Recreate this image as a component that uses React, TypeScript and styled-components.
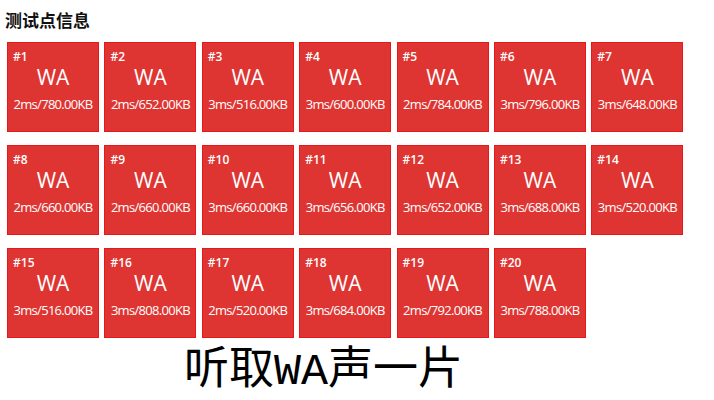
import React from "react";
import styled, { createGlobalStyle } from "styled-components";

const Global = createGlobalStyle`
  html, body { margin: 0; padding: 0; background: #ffffff; }
  body { font-family: "Open Sans", "Noto Sans CJK SC", sans-serif; }
`;

const Page = styled.div`
  width: 714px;
  height: 400px;
  overflow: hidden;
  padding-left: 5px;
  box-sizing: border-box;
`;

const Title = styled.h3`
  margin: 0;
  padding-top: 8px;
  font-family: "Noto Sans CJK SC", sans-serif;
  font-size: 17px;
  line-height: 24px;
  font-weight: 700;
  color: #111;
`;

const Grid = styled.div`
  margin: 10px 0 0 2px;
  display: grid;
  grid-template-columns: repeat(7, 92px);
  grid-auto-rows: 90px;
  column-gap: 5.4px;
  row-gap: 13px;
`;

const Card = styled.div`
  box-sizing: border-box;
  border: 1px solid #e81818;
  background: #de3532;
  color: #ffffff;
  padding: 6px 0 0 5px;
  display: flex;
  flex-direction: column;
  font-family: "Open Sans", sans-serif;
`;

const Label = styled.div`
  font-size: 12px;
  line-height: 16px;
  font-weight: 600;
`;

const Status = styled.div`
  font-size: 21px;
  line-height: 24px;
  font-weight: 500;
  text-align: center;
  margin-left: -5px;
`;

const Stats = styled.div`
  margin: 6.5px 0 0 -5px;
  font-size: 13px;
  line-height: 16px;
  letter-spacing: -0.7px;
  text-align: center;
`;

const Slogan = styled.div`
  margin: 12px 0 0 179px;
  font-family: "Liberation Mono", "Noto Sans CJK SC", monospace;
  font-size: 45px;
  line-height: 46px;
  color: #000;
  white-space: nowrap;
`;

const cases: [string, string][] = [
  ["2ms", "780.00KB"],
  ["2ms", "652.00KB"],
  ["3ms", "516.00KB"],
  ["3ms", "600.00KB"],
  ["2ms", "784.00KB"],
  ["3ms", "796.00KB"],
  ["3ms", "648.00KB"],
  ["2ms", "660.00KB"],
  ["2ms", "660.00KB"],
  ["3ms", "660.00KB"],
  ["3ms", "656.00KB"],
  ["3ms", "652.00KB"],
  ["3ms", "688.00KB"],
  ["3ms", "520.00KB"],
  ["3ms", "516.00KB"],
  ["3ms", "808.00KB"],
  ["2ms", "520.00KB"],
  ["3ms", "684.00KB"],
  ["2ms", "792.00KB"],
  ["3ms", "788.00KB"],
];

export default function App() {
  return (
    <>
      <Global />
      <Page>
        <Title>测试点信息</Title>
        <Grid>
          {cases.map(([t, m], i) => (
            <Card key={i}>
              <Label>#{i + 1}</Label>
              <Status>WA</Status>
              <Stats>
                {t}/{m}
              </Stats>
            </Card>
          ))}
        </Grid>
        <Slogan>听取WA声一片</Slogan>
      </Page>
    </>
  );
}
